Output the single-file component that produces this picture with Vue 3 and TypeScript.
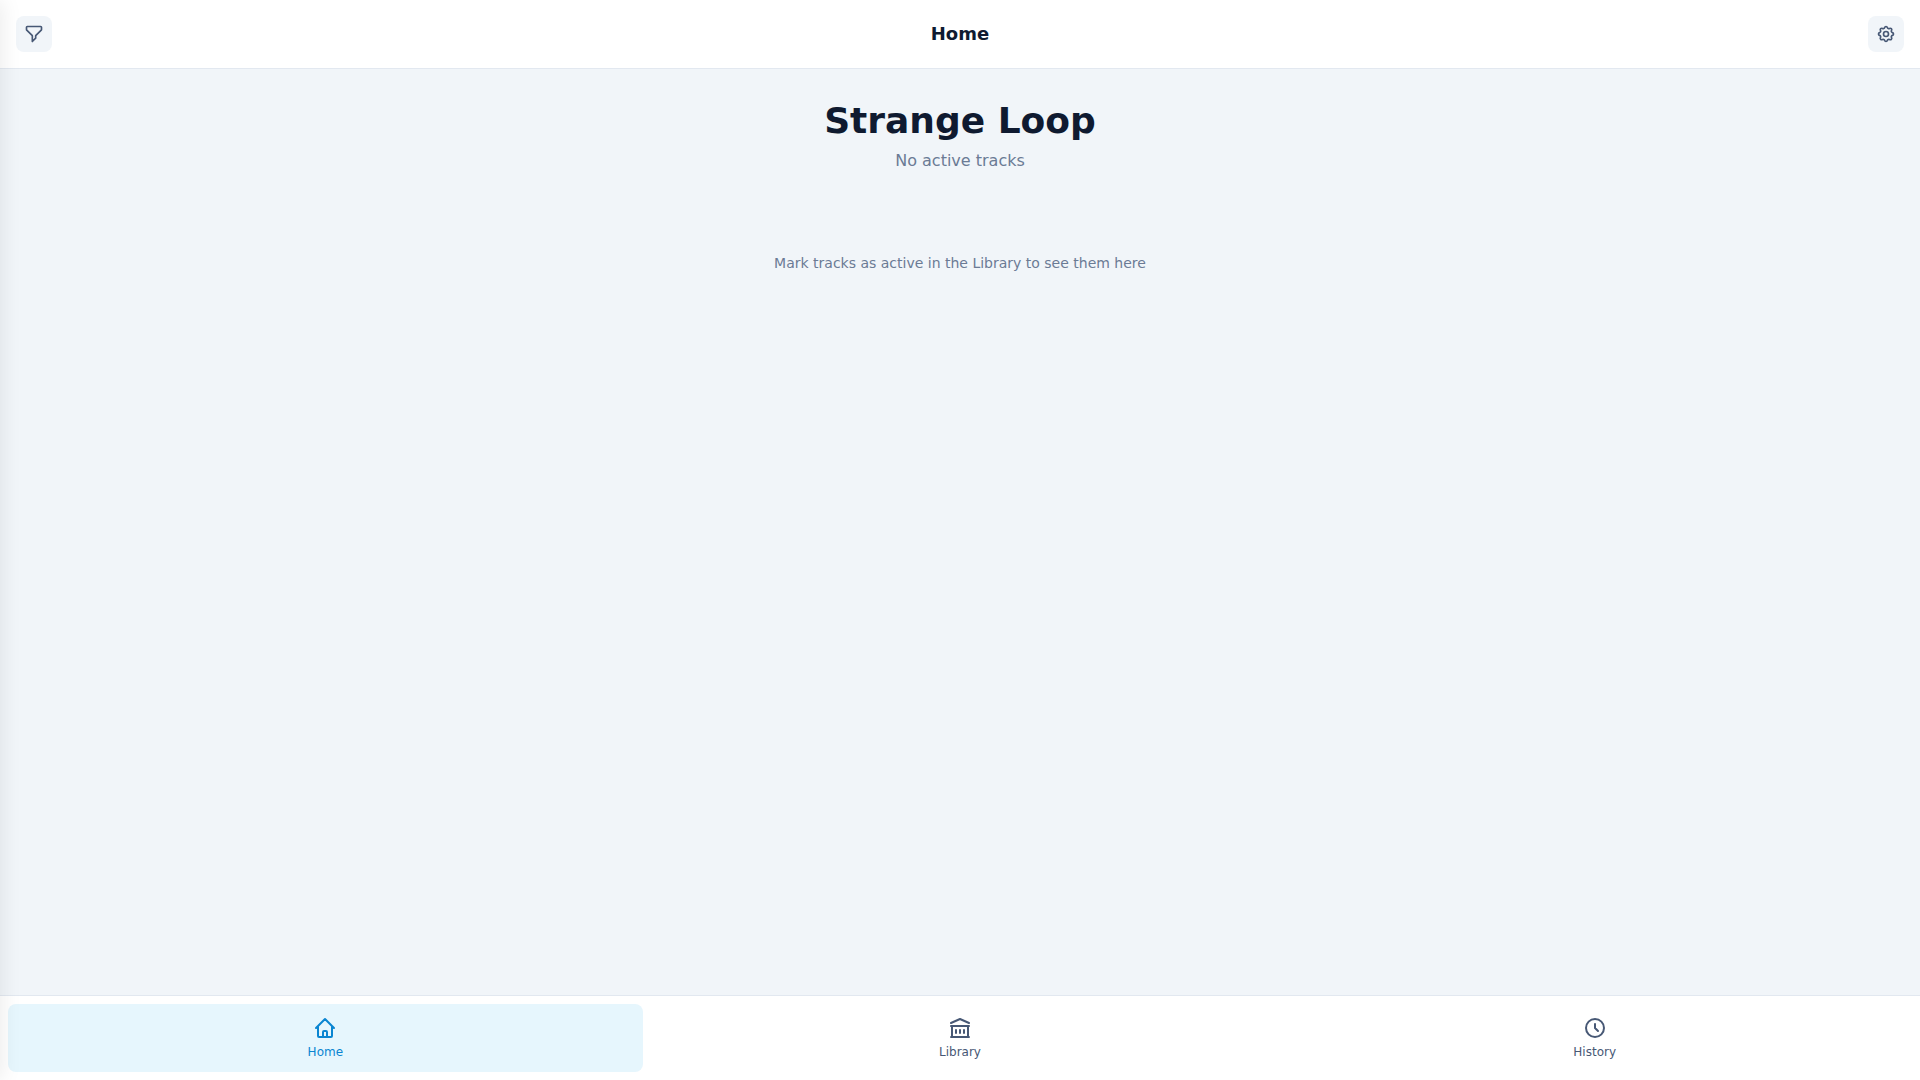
<script setup lang="ts">
import { ref } from 'vue';

const active = ref('home');

const TABS = [
  { id: 'home', label: 'Home' },
  { id: 'library', label: 'Library' },
  { id: 'history', label: 'History' },
];
</script>

<template>
  <div class="app">
    <div class="drawer"></div>
    <header class="header">
      <button class="icon-btn" aria-label="Filter">
        <svg width="20" height="20" viewBox="0 0 24 24" fill="none" stroke="currentColor" stroke-width="2" stroke-linecap="round" stroke-linejoin="round">
          <path d="M3 4a1 1 0 011-1h16a1 1 0 011 1v2.586a1 1 0 01-.293.707l-6.414 6.414a1 1 0 00-.293.707V17l-4 4v-6.586a1 1 0 00-.293-.707L3.293 7.293A1 1 0 013 6.586V4z"/>
        </svg>
      </button>
      <h1 class="title">Home</h1>
      <button class="icon-btn" aria-label="Settings">
        <svg width="20" height="20" viewBox="0 0 24 24" fill="none" stroke="currentColor" stroke-width="2" stroke-linecap="round" stroke-linejoin="round">
          <path d="M10.325 4.317c.426-1.756 2.924-1.756 3.35 0a1.724 1.724 0 002.573 1.066c1.543-.94 3.31.826 2.37 2.37a1.724 1.724 0 001.065 2.572c1.756.426 1.756 2.924 0 3.35a1.724 1.724 0 00-1.066 2.573c.94 1.543-.826 3.31-2.37 2.37a1.724 1.724 0 00-2.572 1.065c-.426 1.756-2.924 1.756-3.35 0a1.724 1.724 0 00-2.573-1.066c-1.543.94-3.31-.826-2.37-2.37a1.724 1.724 0 00-1.065-2.572c-1.756-.426-1.756-2.924 0-3.35a1.724 1.724 0 001.066-2.573c-.94-1.543.826-3.31 2.37-2.37.996.608 2.296.07 2.572-1.065z"/>
          <path d="M15 12a3 3 0 11-6 0 3 3 0 016 0z"/>
        </svg>
      </button>
    </header>

    <main class="content">
      <h2 class="heading">Strange Loop</h2>
      <p class="status">No active tracks</p>
      <p class="hint">Mark tracks as active in the Library to see them here</p>
    </main>

    <nav class="tabs">
      <button
        v-for="tab in TABS" :key="tab.id"
        class="tab"
        :class="{ active: active === tab.id }"
        @click="active = tab.id"
      >
        <svg width="24" height="24" viewBox="0 0 24 24" fill="none" stroke="currentColor" stroke-width="2" stroke-linecap="round" stroke-linejoin="round">
          <path v-if="tab.id === 'home'" d="M3 12l2-2m0 0l7-7 7 7M5 10v10a1 1 0 001 1h3m10-11l2 2m-2-2v10a1 1 0 01-1 1h-3m-6 0a1 1 0 001-1v-4a1 1 0 011-1h2a1 1 0 011 1v4a1 1 0 001 1m-6 0h6"/>
          <path v-else-if="tab.id === 'library'" d="M8 14v3m4-3v3m4-3v3M3 21h18M3 10h18M3 7l9-4 9 4M4 10h16v11H4V10z"/>
          <path v-else d="M12 8v4l3 3m6-3a9 9 0 11-18 0 9 9 0 0118 0z"/>
        </svg>
        <span class="tab-label">{{ tab.label }}</span>
      </button>
    </nav>
  </div>
</template>

<style scoped>
.app {
  height: 100vh; display: flex; flex-direction: column; position: relative;
  overflow: hidden; background: #f1f5f9;
  font-family: 'DejaVu Sans', sans-serif; color: #0f1a30;
}
.drawer {
  position: absolute; top: 0; bottom: 0; left: -300px; width: 300px; z-index: 10;
  box-shadow: 2px 0 20px rgba(0, 0, 0, 0.08);
}
.header {
  height: 68px; flex: none; display: flex; align-items: center; justify-content: space-between;
  padding: 0 16px; background: #fff; border-bottom: 1px solid #e2e8f0;
}
.title { margin: 0; font-size: 18px; font-weight: 700; line-height: 28px; }
.icon-btn {
  width: 36px; height: 36px; padding: 0; border: none; border-radius: 8px;
  background: #f1f5f9; color: #475875; cursor: pointer;
  display: flex; align-items: center; justify-content: center;
}
.content {
  flex: 1; display: flex; flex-direction: column; align-items: center; padding-top: 25px;
}
.heading { margin: 0; font-size: 36px; font-weight: 700; line-height: 54px; }
.status { margin: 1px 0 0; font-size: 16px; line-height: 24px; color: #6b7b95; }
.hint { margin: 80px 0 0; font-size: 14px; line-height: 21px; color: #6b7b95; }
.tabs {
  flex: none; display: flex; padding: 8px; background: #fff; border-top: 1px solid #e2e8f0;
}
.tab {
  flex: 1; height: 68px; padding: 0; border: none; border-radius: 8px; background: none;
  color: #475875; font-family: inherit; cursor: pointer;
  display: flex; flex-direction: column; align-items: center; justify-content: center; gap: 4px;
}
.tab.active { background: #e6f6fd; color: #0a85d1; }
.tab-label { font-size: 12px; line-height: 16px; }
</style>
